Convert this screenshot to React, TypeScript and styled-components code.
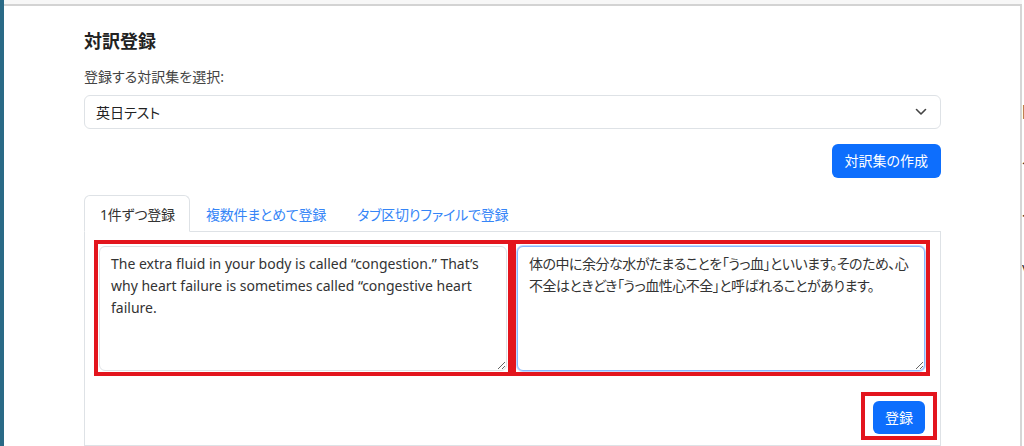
import React from 'react'
import styled, { createGlobalStyle } from 'styled-components'

const GlobalStyle = createGlobalStyle`
  html, body {
    margin: 0;
    padding: 0;
    background: #f7f7f7;
  }
  body {
    font-family: "Noto Sans", "Noto Sans CJK JP", sans-serif;
    font-feature-settings: "palt";
    color: #212529;
  }
  * {
    box-sizing: border-box;
  }
`

const Page = styled.div`
  display: flex;
  height: 446px;
  overflow: hidden;
`

const LeftEdge = styled.div`
  width: 4px;
  flex: none;
  background: #2a6a86;
`

const RightEdge = styled.div`
  width: 2px;
  flex: none;
  overflow: hidden;
  background: #fff;
  padding-top: 98px;
  font-size: 15px;
  line-height: 26px;
  color: #333;
  white-space: nowrap;
`

const Dialog = styled.div`
  flex: 1;
  margin-top: 4px;
  background: #fff;
  border-top: 2px solid #d3d3d3;
  border-right: 2px solid #d6d6d6;
  padding: 24px 79px 0 80px;
  display: flex;
  flex-direction: column;
`

const Title = styled.h2`
  margin: 0 0 14px;
  font-size: 18px;
  line-height: 22px;
  font-weight: 700;
  color: #222;
`

const Label = styled.label`
  display: block;
  font-size: 14px;
  line-height: 21px;
  color: #444;
  margin-bottom: 8px;
`

const SelectBox = styled.div`
  height: 34px;
  border: 1px solid #dee2e6;
  border-radius: 6px;
  padding: 0 13px 0 11px;
  display: flex;
  align-items: center;
  justify-content: space-between;
  font-size: 14px;
  color: #222;
`

const ActionRow = styled.div`
  display: flex;
  justify-content: flex-end;
  margin-top: 15px;
`

const PrimaryButton = styled.button<{ $h?: number; $px?: number }>`
  height: ${p => p.$h ?? 34}px;
  padding: 0 ${p => p.$px ?? 12}px;
  border: none;
  border-radius: 6px;
  background: #0d6efd;
  color: #fff;
  font-family: inherit;
  font-feature-settings: "palt";
  font-size: 14px;
  line-height: 1;
  cursor: pointer;
`

const TabList = styled.div`
  display: flex;
  margin-top: 17px;
  border-bottom: 1px solid #dee2e6;
`

const Tab = styled.div<{ $active?: boolean }>`
  height: 37px;
  padding: 0 14px 0 15px;
  margin-bottom: -1px;
  display: flex;
  align-items: center;
  font-size: 14px;
  letter-spacing: -0.2px;
  color: ${p => (p.$active ? '#333' : '#3585f7')};
  background: ${p => (p.$active ? '#fff' : 'transparent')};
  border: 1px solid ${p => (p.$active ? '#dee2e6' : 'transparent')};
  border-bottom-color: ${p => (p.$active ? '#fff' : 'transparent')};
  border-radius: 6px 6px 0 0;
`

const TabPanel = styled.div`
  flex: 1;
  border: 1px solid #dee2e6;
  border-top: none;
  padding: 8px 10px 0 9px;
`

const EditorRow = styled.div`
  display: flex;
`

const Marked = styled.div<{ $pad?: string }>`
  border: 4px solid #e3151d;
  padding: ${p => p.$pad ?? '2px 1px 1px'};
  display: flex;
`

const EditorCell = styled(Marked)`
  flex: 1;
`

const TextArea = styled.textarea<{ $focused?: boolean; $tight?: boolean }>`
  width: 100%;
  height: 125px;
  resize: vertical;
  border: 1px solid ${p => (p.$focused ? '#86b7fe' : '#dee2e6')};
  box-shadow: ${p => (p.$focused ? '0 0 0 1px #c2dafe' : 'none')};
  border-radius: 6px;
  padding: 6px 11px;
  font-family: "Noto Sans", "Noto Sans CJK JP", sans-serif;
  font-feature-settings: "palt";
  font-size: 14px;
  line-height: 22px;
  letter-spacing: ${p => (p.$tight ? '-0.5px' : 'normal')};
  color: #333;
  outline: none;
`

const SubmitRow = styled.div`
  display: flex;
  justify-content: flex-end;
  margin-top: 16px;
  margin-right: -7px;
`

const Chevron = () => (
  <svg width="12" height="8" viewBox="0 0 12 8" fill="none">
    <path d="M1.5 1.5 6 6l4.5-4.5" stroke="#444" strokeWidth="1.6" strokeLinecap="round" strokeLinejoin="round" />
  </svg>
)

const english =
  'The extra fluid in your body is called “congestion.” That’s why heart failure is sometimes called “congestive heart failure.'
const japanese =
  '体の中に余分な水がたまることを「うっ血」といいます。そのため、心不全はときどき「うっ血性心不全」と呼ばれることがあります。'

export default function App() {
  return (
    <>
      <GlobalStyle />
      <Page>
        <LeftEdge />
        <Dialog>
          <Title>対訳登録</Title>
          <Label>登録する対訳集を選択:</Label>
          <SelectBox>
            <span>英日テスト</span>
            <Chevron />
          </SelectBox>
          <ActionRow>
            <PrimaryButton $px={13}>対訳集の作成</PrimaryButton>
          </ActionRow>
          <TabList>
            <Tab $active>1件ずつ登録</Tab>
            <Tab>複数件まとめて登録</Tab>
            <Tab>タブ区切りファイルで登録</Tab>
          </TabList>
          <TabPanel>
            <EditorRow>
              <EditorCell>
                <TextArea defaultValue={english} />
              </EditorCell>
              <EditorCell>
                <TextArea $focused $tight defaultValue={japanese} />
              </EditorCell>
            </EditorRow>
            <SubmitRow>
              <Marked $pad="5px 8px 2px">
                <PrimaryButton $h={33}>登録</PrimaryButton>
              </Marked>
            </SubmitRow>
          </TabPanel>
        </Dialog>
        <RightEdge>
          <div>区</div>
          <div>ト</div>
          <div>ダ</div>
          <div>&nbsp;</div>
          <div>&lt;</div>
          <div>&nbsp;</div>
          <div>v</div>
        </RightEdge>
      </Page>
    </>
  )
}
